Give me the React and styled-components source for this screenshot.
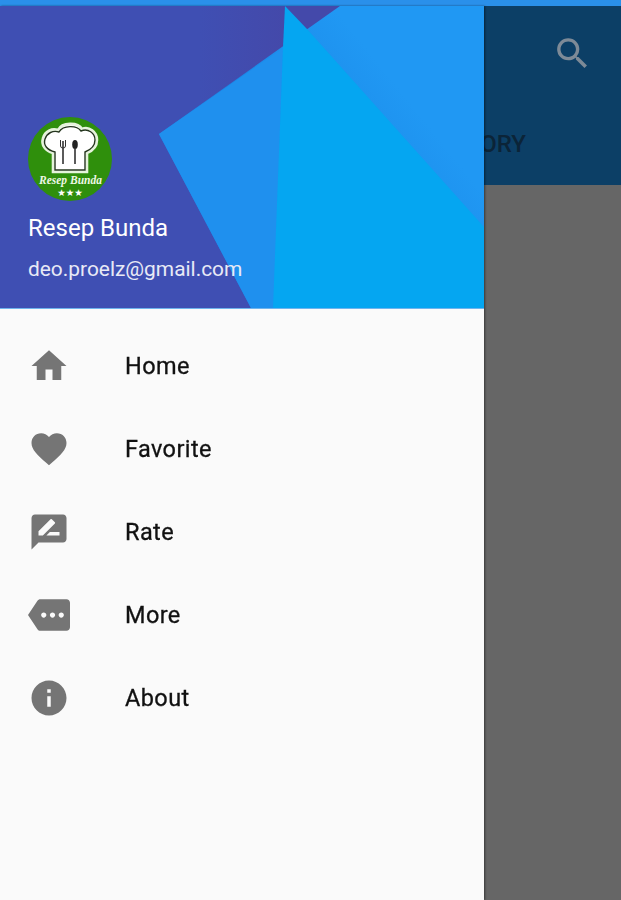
import React from "react";
import styled, { createGlobalStyle } from "styled-components";
import { MdHome, MdFavorite, MdRateReview, MdMore, MdInfo, MdSearch } from "react-icons/md";

const Global = createGlobalStyle`
  html, body { margin: 0; padding: 0; background: #666; }
  body { font-family: Roboto, "Liberation Sans", sans-serif; }
`;

const Page = styled.div`
  width: 621px;
  height: 900px;
  display: flex;
  flex-direction: column;
  overflow: hidden;
  filter: blur(0.4px);
`;
const StatusBar = styled.div`
  height: 6px;
  flex-shrink: 0;
  background: #2a90ea;
`;
const Body = styled.div`
  flex: 1;
  display: flex;
  min-height: 0;
`;
const Drawer = styled.aside`
  width: 484px;
  flex-shrink: 0;
  display: flex;
  flex-direction: column;
  background: #fafafa;
  box-shadow: 1px 0 2px rgba(0, 0, 0, 0.45);
  position: relative;
  z-index: 1;
`;
const DrawerHeader = styled.header`
  height: 303px;
  box-sizing: border-box;
  position: relative;
  overflow: hidden;
  display: flex;
  flex-direction: column;
  padding: 111px 0 0 28px;
  background: #3f4fb3;
  border-bottom: 1px solid #6fb4ee;
  color: #fff;
`;
const HeaderArt = styled.svg`
  position: absolute;
  inset: 0;
`;
const Avatar = styled.svg`
  position: relative;
  width: 84px;
  height: 84px;
  display: block;
`;
const UserName = styled.div`
  position: relative;
  margin-top: 13px;
  font-size: 24px;
  line-height: 28px;
`;
const UserMail = styled.div`
  position: relative;
  margin-top: 15px;
  font-size: 20.9px;
  line-height: 24px;
  color: #e8eaf6;
`;
const Menu = styled.nav`
  display: flex;
  flex-direction: column;
  padding-top: 15px;
`;
const MenuItem = styled.div`
  height: 83px;
  display: flex;
  align-items: center;
  padding-left: 28px;
  color: #757575;
  svg { flex-shrink: 0; }
`;
const MenuLabel = styled.span`
  margin-left: 55px;
  font-size: 23.5px;
  font-weight: 400;
  letter-spacing: 0.4px;
  -webkit-text-stroke: 0.3px #111;
  color: #111;
`;
const Backdrop = styled.div`
  flex: 1;
  min-width: 0;
  display: flex;
  flex-direction: column;
`;
const AppBar = styled.div`
  height: 179px;
  flex-shrink: 0;
  display: flex;
  flex-direction: column;
  background: #0c3f66;
  overflow: hidden;
`;
const ActionRow = styled.div`
  height: 94px;
  display: flex;
  justify-content: flex-end;
  align-items: center;
  padding: 0 28px 0 0;
  color: #7d8a97;
`;
const TabRow = styled.div`
  display: flex;
  justify-content: flex-end;
  padding: 30px 95px 0 0;
`;
const TabLabel = styled.span`
  font-size: 24px;
  font-weight: 500;
  white-space: nowrap;
  color: #0b2438;
`;

const items = [
  { label: "Home", Icon: MdHome },
  { label: "Favorite", Icon: MdFavorite },
  { label: "Rate", Icon: MdRateReview },
  { label: "More", Icon: MdMore },
  { label: "About", Icon: MdInfo },
];

function ResepLogo() {
  return (
    <Avatar viewBox="0 0 84 84">
      <circle cx="42" cy="42" r="42" fill="#2f8f0c" />
      <path
        d="M25 55 L25 36 C17 34 13 28 15 21 C17 14 24 11 30 13 C34 5 50 5 54 12 C61 9 69 15 69 23 C69 30 64 34 59 36 L59 55 Z"
        fill="#fff"
        stroke="#e6f3dc"
        strokeWidth="2.6"
      />
      <path
        d="M27 53 L27 35 C19 33 15 28 17 22 C19 16 25 13 31 15 C35 8 49 8 53 14 C60 11 67 16 67 23 C67 29 62 33 57 35 L57 53 Z"
        fill="#fff"
        stroke="#26361f"
        strokeWidth="1.4"
      />
      <path d="M35 24 V47 M47 32 V47" stroke="#333" strokeWidth="1.6" fill="none" />
      <path d="M32.5 23 V29 Q32.5 31 35 31 Q37.5 31 37.5 29 V23" stroke="#333" strokeWidth="1" fill="none" />
      <ellipse cx="47" cy="27.5" rx="2.8" ry="4.5" fill="#222" />
      <text x="42.5" y="67" textAnchor="middle" fontFamily="Liberation Serif, serif" fontStyle="italic" fontWeight="bold" fontSize="11.5" fill="#eef7e6">
        Resep Bunda
      </text>
      <text x="42" y="79" textAnchor="middle" fontFamily="DejaVu Sans, sans-serif" fontSize="9.5" fill="#fff">
        ★★★
      </text>
    </Avatar>
  );
}

export default function App() {
  return (
    <Page>
      <Global />
      <StatusBar />
      <Body>
        <Drawer>
          <DrawerHeader>
            <HeaderArt width="484" height="302" viewBox="0 6 484 302">
              <defs>
                <linearGradient id="rightBlue" x1="300" y1="170" x2="400" y2="90" gradientUnits="userSpaceOnUse">
                  <stop offset="0" stopColor="#1a86e6" />
                  <stop offset="1" stopColor="#2098f3" />
                </linearGradient>
                <linearGradient id="indigoShade" x1="200" y1="0" x2="284" y2="0" gradientUnits="userSpaceOnUse">
                  <stop offset="0" stopColor="#3f4fb3" />
                  <stop offset="1" stopColor="#4449aa" />
                </linearGradient>
              </defs>
              <polygon points="160,6 340,6 159,134" fill="url(#indigoShade)" />
              <polygon points="340,6 484,6 484,308 251,308 159,134" fill="url(#rightBlue)" />
              <polygon points="159,134 283,48 274,308 251,308" fill="#1f90ee" />
              <polygon points="285,6 307,29 484,227 484,308 273,308 283,47" fill="#05a6f1" />
            </HeaderArt>
            <ResepLogo />
            <UserName>Resep Bunda</UserName>
            <UserMail>deo.proelz@gmail.com</UserMail>
          </DrawerHeader>
          <Menu>
            {items.map(({ label, Icon }) => (
              <MenuItem key={label}>
                <Icon size={42} />
                <MenuLabel>{label}</MenuLabel>
              </MenuItem>
            ))}
          </Menu>
        </Drawer>
        <Backdrop>
          <AppBar>
            <ActionRow>
              <MdSearch size={41} />
            </ActionRow>
            <TabRow>
              <TabLabel>CATEGORY</TabLabel>
            </TabRow>
          </AppBar>
        </Backdrop>
      </Body>
    </Page>
  );
}
